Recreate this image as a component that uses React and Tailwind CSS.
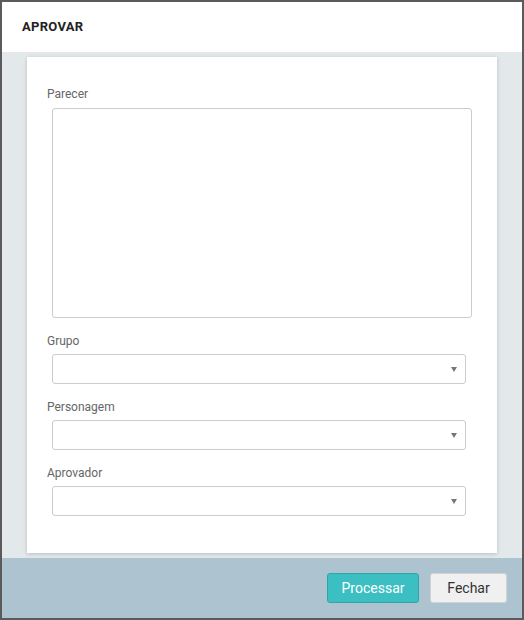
import React from 'react';

const FONT = { fontFamily: 'Roboto, "Liberation Sans", sans-serif' };

function SelectField({ label }) {
  return (
    <div className="mt-[16px]">
      <label className="block text-[12px] leading-[14px] text-[#666] mb-[6px]">{label}</label>
      <div className="ml-[5px] mr-[11px] h-[30px] rounded-[3px] border border-[#cccccc] bg-white flex items-center justify-end pr-[8px]">
        <span className="w-0 h-0 border-l-[3px] border-r-[3px] border-t-[5px] border-l-transparent border-r-transparent border-t-[#777]" />
      </div>
    </div>
  );
}

export default function App() {
  return (
    <div style={FONT} className="w-[524px] h-[620px] border-2 border-[#5b5b5b] flex flex-col bg-[#e3e8ea]">
      {/* header */}
      <div className="h-[50px] bg-white flex items-center px-[20px]">
        <h1 className="text-[13px] font-bold text-[#222] tracking-[0.3px]">APROVAR</h1>
      </div>

      {/* body */}
      <div className="flex-1 px-[25px] pt-[5px] pb-[5px]">
        <div className="h-[496px] bg-white shadow-[0_1px_4px_rgba(0,0,0,0.18)] px-[20px] pt-[30px]">
          <label className="block text-[12px] leading-[14px] text-[#666] mb-[7px]">Parecer</label>
          <textarea className="block ml-[5px] w-[420px] h-[210px] rounded-[3px] border border-[#cccccc] resize-none outline-none" />
          <SelectField label="Grupo" />
          <SelectField label="Personagem" />
          <SelectField label="Aprovador" />
        </div>
      </div>

      {/* footer */}
      <div className="h-[60px] bg-[#adc4d0] flex items-start justify-end gap-[11px] pt-[15px] pr-[15px]">
        <button className="w-[92px] h-[30px] rounded-[3px] bg-[#3bbfc3] border border-[#2ba7aa] text-white text-[14px]">
          Processar
        </button>
        <button className="w-[77px] h-[30px] rounded-[3px] bg-[#f0f0f0] border border-[#cfd4d6] text-[#333] text-[14px]">
          Fechar
        </button>
      </div>
    </div>
  );
}
